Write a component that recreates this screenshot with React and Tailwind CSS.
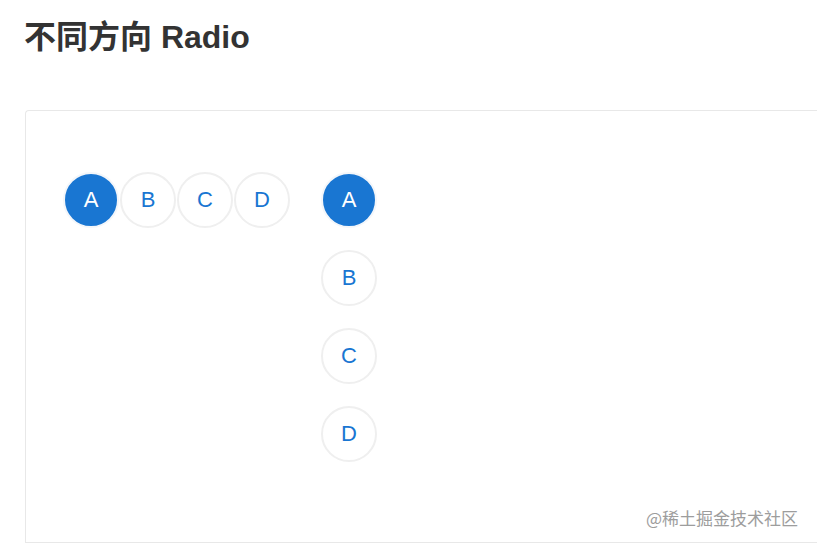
import React from "react";

function Circle({ label, selected }) {
  return (
    <div
      className={
        "flex h-[56px] w-[56px] shrink-0 items-center justify-center rounded-full border-2 text-[22px] leading-none " +
        (selected
          ? "border-[#f3f6fa] bg-[#1976d2] text-white"
          : "border-[#efefef] bg-white text-[#1976d2]")
      }
    >
      {label}
    </div>
  );
}

export default function App() {
  const items = ["A", "B", "C", "D"];
  return (
    <div className="relative h-[545px] w-[817px] overflow-hidden bg-white font-['Liberation_Sans','Noto_Sans_CJK_SC',sans-serif]">
      <h1 className="pl-[24px] pt-[18px] text-[32px] font-bold leading-[38px] text-[#333333]">
        不同方向 Radio
      </h1>
      <div className="ml-[25px] mt-[54px] h-[433px] rounded-tl-[4px] border border-r-0 border-[#e8e8e8] pl-[37px] pt-[61px]">
        <div className="flex items-start gap-[31px]">
          <div className="flex gap-px">
            {items.map((l, i) => (
              <Circle key={l} label={l} selected={i === 0} />
            ))}
          </div>
          <div className="flex flex-col gap-[22px]">
            {items.map((l, i) => (
              <Circle key={l} label={l} selected={i === 0} />
            ))}
          </div>
        </div>
      </div>
      <div className="absolute left-[646px] top-[507px] text-[17px] leading-[22px] text-[#9d9d9d] font-['Noto_Sans_CJK_SC',sans-serif]">
        @稀土掘金技术社区
      </div>
    </div>
  );
}
